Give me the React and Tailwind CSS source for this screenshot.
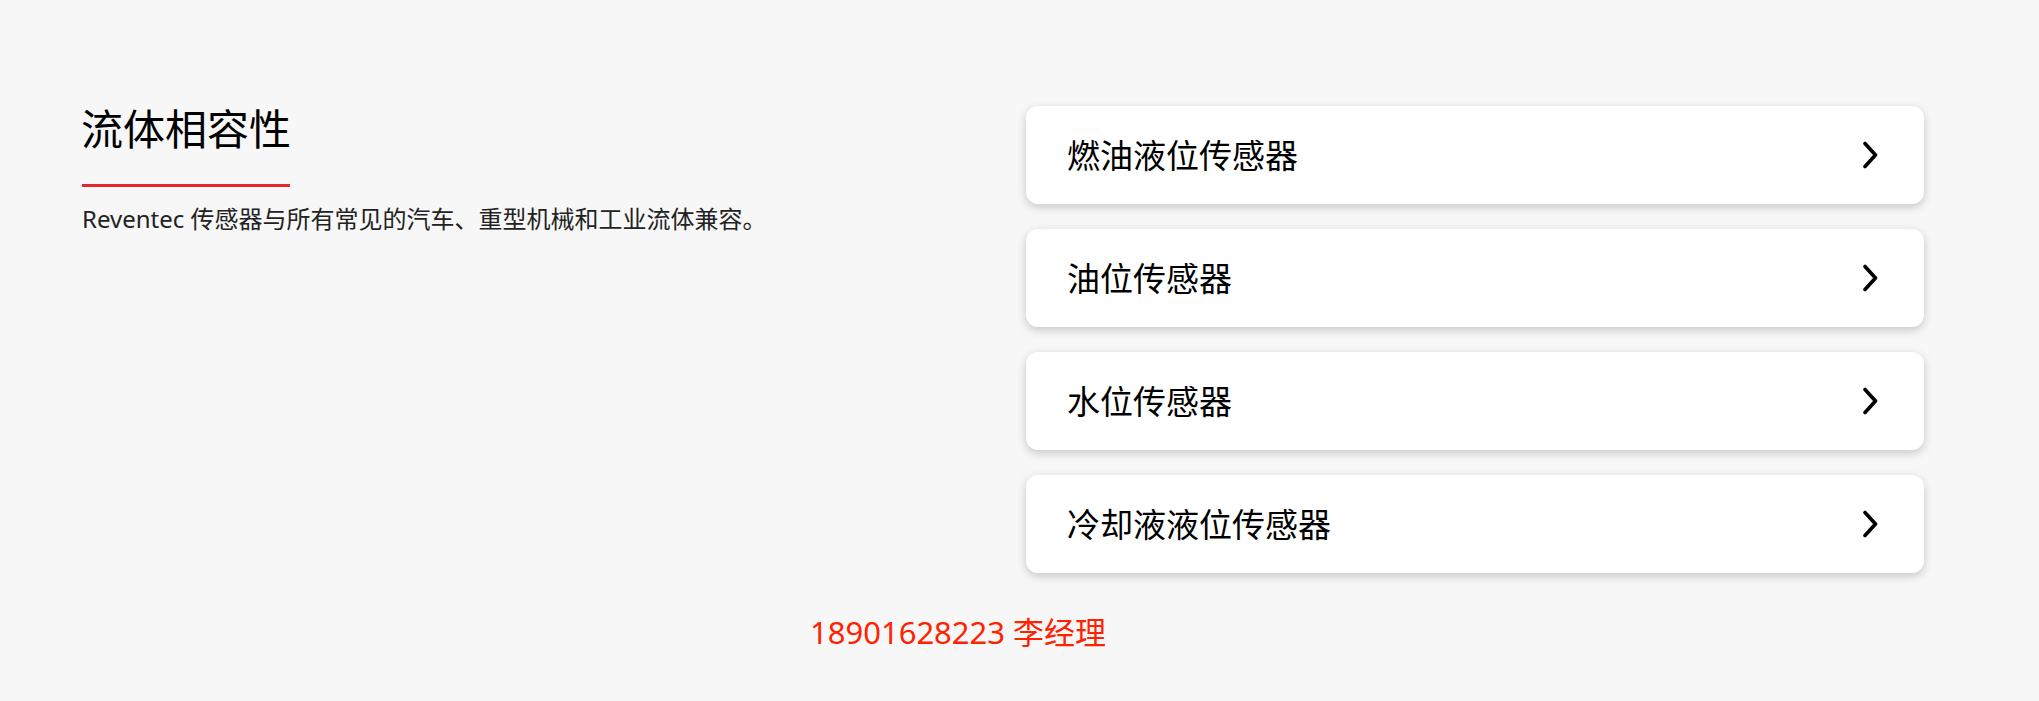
import React from 'react';

const sensors = ['燃油液位传感器', '油位传感器', '水位传感器', '冷却液液位传感器'];

const Chevron = () => (
  <svg width="16" height="28" viewBox="0 0 16 28" fill="none" className="shrink-0">
    <path d="M3 2.5 L13.5 14 L3 25.5" stroke="#000" strokeWidth="3.6" strokeLinecap="round" strokeLinejoin="round" />
  </svg>
);

const SensorCard = ({ label }) => (
  <a
    href="#"
    className="flex h-[98px] items-center justify-between rounded-[12px] bg-white pl-[41px] pr-[46px] shadow-[0_3px_10px_rgba(0,0,0,0.2)]"
  >
    <span className="text-[33px] leading-none text-black">{label}</span>
    <Chevron />
  </a>
);

export default function App() {
  return (
    <div
      className="min-h-screen bg-[#f7f7f7]"
      style={{ fontFamily: '"Noto Sans", "Noto Sans CJK SC", sans-serif' }}
    >
      <div className="grid w-[1924px] grid-cols-2 gap-x-[46px] pl-[82px] pt-[106px]">
        {/* left column */}
        <div>
          <h2 className="-ml-[1px] mt-[2px] text-[42px] font-normal leading-none text-black">流体相容性</h2>
          <div className="mt-[34px] h-[3px] w-[208px] bg-[#e0282e]" />
          <p className="mt-[20px] text-[24px] leading-none text-[#222]">
            Reventec 传感器与所有常见的汽车、重型机械和工业流体兼容。
          </p>
        </div>

        {/* right column */}
        <div className="flex flex-col gap-[25px]">
          {sensors.map((s) => (
            <SensorCard key={s} label={s} />
          ))}
        </div>
      </div>

      <p className="ml-[810px] mt-[44px] text-[31px] leading-none text-[#ff2200]">
        18901628223 李经理
      </p>
    </div>
  );
}
